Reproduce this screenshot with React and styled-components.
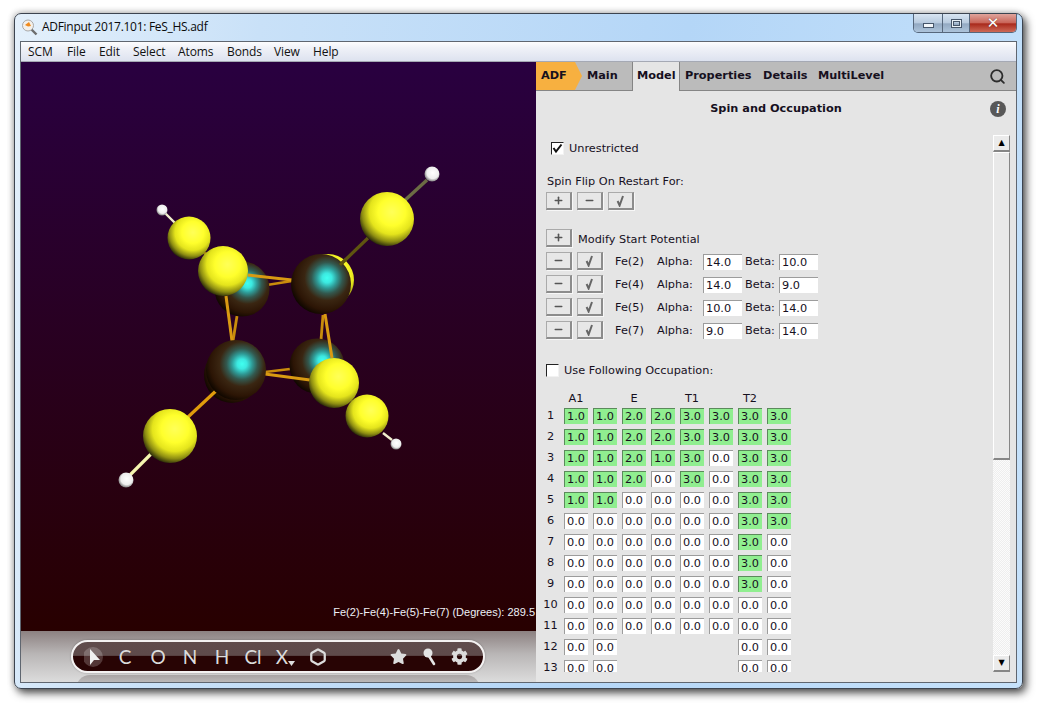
import React from "react";
import styled, { createGlobalStyle } from "styled-components";
import { Search, Hexagon, Plus, Minus } from "lucide-react";
import { FaStar, FaCog } from "react-icons/fa";

const GlobalStyle = createGlobalStyle`
  html, body { margin: 0; background: #fff; }
  * { box-sizing: border-box; }
`;

const Page = styled.div`
  padding: 13px 0 0 14px;
  height: 709px;
  overflow: hidden;
`;

const Window = styled.div`
  width: 1009px;
  height: 676px;
  display: flex;
  flex-direction: column;
  border: 1px solid #3c4450;
  border-radius: 7px;
  background: linear-gradient(100deg, #e4f0fb 0%, #c9e1f8 22%, #b4d6f7 60%, #c6e2fb 100%);
  box-shadow: 3px 4px 9px rgba(0, 0, 0, 0.7), -1px -1px 6px rgba(0, 0, 0, 0.2);
`;

const TitleBar = styled.div`
  height: 27px;
  flex: none;
  display: flex;
  align-items: flex-start;
  padding: 0 5px 0 6px;
  font: 12px/26px "Open Sans", sans-serif;
  letter-spacing: -0.29px;
  color: #0a0a0a;
`;

const AppIcon = styled.svg`
  width: 17px;
  height: 17px;
  margin: 5px 4px 0 0;
  flex: none;
`;

const WindowControls = styled.div`
  margin-left: auto;
  display: flex;
  height: 19px;
  border: 1px solid #56677c;
  border-top: none;
  border-radius: 0 0 5px 5px;
  overflow: hidden;
`;

const ControlButton = styled.div`
  width: ${({ $w }) => $w}px;
  display: flex;
  align-items: center;
  justify-content: center;
  border-left: ${({ $first }) => ($first ? "none" : "1px solid #56677c")};
  background: ${({ $close }) =>
    $close
      ? "linear-gradient(#e0a49c 0%, #c9665a 48%, #a92a1c 55%, #cd6a58 100%)"
      : "linear-gradient(#d8e5f2 0%, #b9cbdf 48%, #93a9c2 55%, #adc4db 100%)"};
`;

const MinGlyph = styled.span`
  width: 11px;
  height: 5px;
  margin-top: 5px;
  background: #f2f6fa;
  border: 1px solid #46566a;
`;

const MaxGlyph = styled.span`
  width: 11px;
  height: 9px;
  background: transparent;
  border: 1px solid #46566a;
  box-shadow: inset 0 0 0 1px #e8f0f7, inset 0 0 0 2px #46566a;
`;

const CloseGlyph = styled.span`
  font: bold 15px/1 "DejaVu Sans", sans-serif;
  color: #fff;
  text-shadow: 0 0 1px #56251e;
`;

const ClientFrame = styled.div`
  flex: 1;
  min-height: 0;
  margin: 0 5px 5px 5px;
  border: 1px solid #5f6670;
  display: flex;
  flex-direction: column;
  background: #e5e5e5;
`;

const MenuBar = styled.div`
  height: 20px;
  flex: none;
  display: flex;
  align-items: center;
  padding: 0 0 1px 7px;
  font: 12px "Open Sans", sans-serif;
  letter-spacing: -0.1px;
  color: #111;
  background: linear-gradient(#fdfdfe 0%, #f0f2f8 30%, #dde2ef 100%);
  border-bottom: 1px solid #a5a9b4;
`;

const MenuItem = styled.span`
  width: ${({ $w }) => $w}px;
  flex: none;
`;

const Main = styled.div`
  flex: 1;
  min-height: 0;
  display: flex;
`;

const LeftPane = styled.div`
  width: 515px;
  flex: none;
  display: flex;
  flex-direction: column;
`;

const Viewport = styled.div`
  position: relative;
  height: 569px;
  flex: none;
  background: linear-gradient(#290040 0%, #280000 100%);
`;

const SceneSvg = styled.svg`
  display: block;
  width: 515px;
  height: 569px;
`;

const Measure = styled.div`
  position: absolute;
  right: 1px;
  top: 544px;
  font: 11px "Liberation Sans", sans-serif;
  color: #eef0f6;
  white-space: nowrap;
`;

const EditBar = styled.div`
  flex: 1;
  padding: 9px 0 0 50px;
  overflow: hidden;
  background: linear-gradient(#8c8181 0%, #b9b6b6 45%, #dcdcdc 100%);
`;

const Pill = styled.div`
  position: relative;
  width: 414px;
  height: 33px;
  display: flex;
  align-items: center;
  padding-left: 7px;
  border: 2px solid #f4f2f2;
  border-radius: 17px;
  background: linear-gradient(#604c4c 0%, #5f4b4b 46%, #280404 50%, #280404 100%);
  box-shadow: 0 0 2px rgba(0, 0, 0, 0.3);
  font: 19px "Lato", sans-serif;
  color: #dcdcdc;

  &::after {
    content: "";
    position: absolute;
    left: 3px;
    right: 3px;
    top: 33px;
    height: 14px;
    border-radius: 14px 14px 0 0;
    background: linear-gradient(#a8a4a4, #cfcdcd);
  }
`;

const Tool = styled.span`
  width: ${({ $w }) => $w}px;
  margin-left: ${({ $gap }) => $gap || 0}px;
  padding-right: ${({ $pr }) => $pr || 0}px;
  flex: none;
  display: flex;
  align-items: center;
  justify-content: center;
  position: relative;
`;

const DropMark = styled.svg`
  position: absolute;
  right: 5px;
  bottom: 2px;
`;

const RightPane = styled.div`
  flex: 1;
  min-width: 0;
  display: flex;
  flex-direction: column;
  font: 11.3px "DejaVu Sans", sans-serif;
  color: #16101e;
  background: #e5e5e5;
`;

const TabBar = styled.div`
  height: 29px;
  flex: none;
  display: flex;
  background: #bbbbbb;
  border-bottom: 1px solid #858585;
  font-weight: bold;
  font-size: 11.3px;
`;

const BrandTab = styled.div`
  width: 46px;
  height: 28px;
  flex: none;
  padding: 7px 0 0 5px;
  background: #f7b040;
  clip-path: polygon(0 0, 39px 0, 46px 50%, 39px 100%, 0 100%);
`;

const Tab = styled.div`
  flex: none;
  width: ${({ $w }) => $w}px;
  padding: 7px 0 0 ${({ $pl }) => $pl || 0}px;
  height: ${({ $active }) => ($active ? "29px" : "28px")};
  background: ${({ $active }) => ($active ? "#e5e5e5" : "transparent")};
  border-left: ${({ $active }) => ($active ? "1px solid #858585" : "none")};
  border-right: ${({ $active }) => ($active ? "1px solid #858585" : "none")};
`;

const SearchSlot = styled.div`
  margin-left: auto;
  padding: 6px 10px 0 0;
  color: #2c2c2c;
`;

const Heading = styled.div`
  height: 44px;
  flex: none;
  display: grid;
  grid-template-columns: 1fr auto 1fr;
  padding-top: 11px;
  font-weight: bold;
  font-size: 11.3px;
`;

const InfoIcon = styled.div`
  justify-self: end;
  width: 16px;
  height: 16px;
  margin: -1px 10px 0 0;
  border-radius: 50%;
  background: #585858;
  color: #fff;
  text-align: center;
  font: italic bold 12px/16px "Liberation Serif", serif;
`;

const Body = styled.div`
  flex: 1;
  min-height: 0;
  display: flex;
  padding: 0 6px 10px 0;
`;

const Content = styled.div`
  flex: 1;
  min-width: 0;
  overflow: hidden;
  padding-top: 7px;
`;

const Scrollbar = styled.div`
  width: 17px;
  flex: none;
  display: flex;
  flex-direction: column;
  background: repeating-conic-gradient(#eeeeee 0 25%, #fbfbfb 0 50%) 0 0 / 2px 2px;
`;

const ScrollButton = styled.div`
  height: 17px;
  flex: none;
  display: flex;
  align-items: center;
  justify-content: center;
  margin-top: ${({ $end }) => ($end ? "auto" : "0")};
  background: #ebebeb;
  border: 1px solid #fff;
  border-right-color: #868686;
  border-bottom: 2px solid #868686;
  font: 8px/1 "DejaVu Sans", sans-serif;
  color: #000;
`;

const ScrollThumb = styled.div`
  height: 308px;
  flex: none;
  background: #e9e9e9;
  border: 1px solid #fff;
  border-right-color: #868686;
  border-bottom: 2px solid #868686;
`;

const CheckRow = styled.div`
  display: flex;
  align-items: center;
  height: 13px;
  gap: ${({ $gap }) => $gap}px;
  margin-top: ${({ $mt }) => $mt || 0}px;
  padding-left: ${({ $pl }) => $pl}px;
`;

const Checkbox = styled.span`
  width: 13px;
  height: 13px;
  flex: none;
  display: flex;
  background: #fff;
  border: 1px solid #f2f2f2;
  border-top-color: #222;
  border-left-color: #222;
`;

const SectionLabel = styled.div`
  margin: 20px 0 0 11px;
  height: 14px;
  line-height: 14px;
`;

const ButtonRow = styled.div`
  display: flex;
  align-items: center;
  height: 18px;
  gap: 5px;
  padding-left: 10px;
  margin-top: ${({ $mt }) => $mt || 0}px;
`;

const SquareButton = styled.div`
  width: 26px;
  height: 18px;
  flex: none;
  display: flex;
  align-items: center;
  justify-content: center;
  background: #e7e7e7;
  border: 1px solid #aaaaaa;
  border-right: 2px solid #8c8c8c;
  border-bottom: 2px solid #8c8c8c;
  box-shadow: 1px 1px 0 #f7f7f7;
  color: #555;
`;

const InlineLabel = styled.span`
  margin-left: ${({ $ml }) => $ml || 0}px;
  margin-top: ${({ $mt }) => $mt || 0}px;
  width: ${({ $w }) => ($w ? `${$w}px` : "auto")};
  flex: none;
`;

const Potentials = styled.div`
  display: flex;
  flex-direction: column;
  gap: 5px;
  margin-top: 19px;
`;

const ValueInput = styled.input`
  width: ${({ $w }) => $w}px;
  height: 16px;
  flex: none;
  padding: 0 0 0 2px;
  margin: 2px 0 0 ${({ $ml }) => $ml || 0}px;
  border: none;
  border-top: 1px solid ${({ $on }) => ($on ? "#5b8a5b" : "#9c9c9c")};
  border-left: 1px solid ${({ $on }) => ($on ? "#5b8a5b" : "#9c9c9c")};
  outline: none;
  border-radius: 0;
  background: ${({ $on }) => ($on ? "#90ee90" : "#fff")};
  font: 11.3px "DejaVu Sans", sans-serif;
  color: #16101e;
`;

const OccupationTable = styled.div`
  display: flex;
  flex-direction: column;
  gap: 5px;
  padding-left: 6px;
  margin-top: 15px;
`;

const TableRow = styled.div`
  display: grid;
  grid-template-columns: 17px repeat(8, 24px);
  column-gap: 5px;
  height: ${({ $head }) => ($head ? "14px" : "16px")};
  margin-bottom: ${({ $head }) => ($head ? "-3px" : "0")};
  align-items: center;
`;

const CellLabel = styled.span`
  text-align: center;
  line-height: 14px;
  white-space: nowrap;
`;

const OccCell = styled(ValueInput)`
  margin: 0;
`;

const menus = [
  ["SCM", 39], ["File", 32], ["Edit", 34], ["Select", 45], ["Atoms", 49],
  ["Bonds", 47], ["View", 39], ["Help", 40],
];

const potentials = [
  ["Fe(2)", "14.0", "10.0"],
  ["Fe(4)", "14.0", "9.0"],
  ["Fe(5)", "10.0", "14.0"],
  ["Fe(7)", "9.0", "14.0"],
];

// 0 = white cell, null = no cell in that place
const occupation = [
  [1, 1, 2, 2, 3, 3, 3, 3],
  [1, 1, 2, 2, 3, 3, 3, 3],
  [1, 1, 2, 1, 3, 0, 3, 3],
  [1, 1, 2, 0, 3, 0, 3, 3],
  [1, 1, 0, 0, 0, 0, 3, 3],
  [0, 0, 0, 0, 0, 0, 3, 3],
  [0, 0, 0, 0, 0, 0, 3, 0],
  [0, 0, 0, 0, 0, 0, 3, 0],
  [0, 0, 0, 0, 0, 0, 3, 0],
  [0, 0, 0, 0, 0, 0, 0, 0],
  [0, 0, 0, 0, 0, 0, 0, 0],
  [0, 0, null, null, null, null, 0, 0],
  [0, 0, null, null, null, null, 0, 0],
];

const bonds = [
  // back-to-front: thin ring bonds, then the stubs out to sulphur and hydrogen
  [267, 285, 292, 281, "#c98c0c", 2.4],
  [237, 316, 233, 341, "#c98c0c", 2.8],
  [323, 315, 321, 340, "#c98c0c", 2.8],
  [265, 372, 290, 369, "#c98c0c", 2.6],
  [340, 265, 368, 238, "#5f5510", 3.2],
  [403, 202, 427, 180, "#6c6c44", 3.4],
  [165, 213, 175, 223, "#f0eecc", 2.4],
  [200, 250, 206, 254, "#a87a10", 3],
  [352, 402, 357, 406, "#b08a10", 3],
  [383, 433, 392, 440, "#f0eecc", 2.4],
  [188, 417, 218, 389, "#e09c0c", 3.2],
  [130, 475, 153, 452, "#f5f5b0", 3.2],
];

const frontBonds = [
  [248, 275, 292, 280, "#d99a12", 3],
  [226, 296, 232, 341, "#d99a12", 3],
  [325, 314, 332, 358, "#d99a12", 3],
  [265, 374, 310, 380, "#d99a12", 3],
];

function Bond({ b }) {
  return <line x1={b[0]} y1={b[1]} x2={b[2]} y2={b[3]} stroke={b[4]} strokeWidth={b[5]} />;
}

function Atom({ x, y, r, fill }) {
  return <circle cx={x} cy={y} r={r} fill={`url(#${fill})`} />;
}

function Molecule() {
  return (
    <SceneSvg viewBox="21 62 515 569">
      <defs>
        <radialGradient id="iron" cx="0.6" cy="0.4" r="0.68">
          <stop offset="0" stopColor="#40fff0" />
          <stop offset="0.12" stopColor="#3ce8e0" />
          <stop offset="0.25" stopColor="#2f9a96" />
          <stop offset="0.38" stopColor="#33584e" />
          <stop offset="0.55" stopColor="#3a2612" />
          <stop offset="0.78" stopColor="#2c1505" />
          <stop offset="0.92" stopColor="#120800" />
          <stop offset="1" stopColor="#000" />
        </radialGradient>
        <radialGradient id="sulphur" cx="0.59" cy="0.37" r="0.67">
          <stop offset="0" stopColor="#ffff58" />
          <stop offset="0.38" stopColor="#ffff2c" />
          <stop offset="0.62" stopColor="#e4e41c" />
          <stop offset="0.82" stopColor="#8e8e12" />
          <stop offset="1" stopColor="#1a1a08" />
        </radialGradient>
        <radialGradient id="hydrogen" cx="0.55" cy="0.42" r="0.65">
          <stop offset="0" stopColor="#ffffff" />
          <stop offset="0.6" stopColor="#eeeeee" />
          <stop offset="1" stopColor="#555555" />
        </radialGradient>
      </defs>
      <Atom x={232} y={375} r={28} fill="iron" />
      <Atom x={328} y={280} r={26} fill="sulphur" />
      {bonds.map((b, i) => <Bond key={i} b={b} />)}
      <Atom x={162} y={210} r={5.5} fill="hydrogen" />
      <Atom x={396} y={444} r={5.5} fill="hydrogen" />
      <Atom x={432} y={174} r={7.5} fill="hydrogen" />
      <Atom x={126} y={480} r={7.5} fill="hydrogen" />
      <Atom x={189} y={238} r={21.5} fill="sulphur" />
      <Atom x={367} y={416} r={21.5} fill="sulphur" />
      <Atom x={242} y={289} r={27.5} fill="iron" />
      <Atom x={317} y={366} r={27.5} fill="iron" />
      {frontBonds.map((b, i) => <Bond key={i} b={b} />)}
      <Atom x={321} y={284} r={30} fill="iron" />
      <Atom x={236} y={370} r={30} fill="iron" />
      <line x1={340} y1={265} x2={346} y2={259} stroke="#5f5510" strokeWidth={3} />
      <Atom x={387} y={219} r={27} fill="sulphur" />
      <Atom x={170} y={436} r={27} fill="sulphur" />
      <Atom x={223} y={271} r={25} fill="sulphur" />
      <Atom x={334} y={383} r={25} fill="sulphur" />
    </SceneSvg>
  );
}

function CheckMark() {
  return (
    <svg width="11" height="11" viewBox="0 0 11 11">
      <path d="M1.5 5 L4 8.5 L9.5 1.5" fill="none" stroke="#111" strokeWidth="2" />
    </svg>
  );
}

function VerifyMark() {
  return (
    <svg width="9" height="12" viewBox="0 0 9 12">
      <path d="M1.6 6 L3.6 10.5 L7 1" fill="none" stroke="#666" strokeWidth="2" />
    </svg>
  );
}

export default function App() {
  return (
    <Page>
      <GlobalStyle />
      <Window>
        <TitleBar>
          <AppIcon viewBox="0 0 17 17">
            <line x1="9" y1="9" x2="15.5" y2="15.5" stroke="#6d6d6d" strokeWidth="2.4" />
            <circle cx="7" cy="6.5" r="5.5" fill="#f4f0ea" stroke="#a8a8a8" strokeWidth="1" />
            <path d="M4 6 L8 3 L10 7 L7 7.5 Z" fill="#f08a1c" />
          </AppIcon>
          <span>ADFinput 2017.101: FeS_HS.adf</span>
          <WindowControls>
            <ControlButton $w={28} $first><MinGlyph /></ControlButton>
            <ControlButton $w={27}><MaxGlyph /></ControlButton>
            <ControlButton $w={47} $close><CloseGlyph>✕</CloseGlyph></ControlButton>
          </WindowControls>
        </TitleBar>
        <ClientFrame>
          <MenuBar>
            {menus.map(([name, w]) => <MenuItem key={name} $w={w}>{name}</MenuItem>)}
          </MenuBar>
          <Main>
            <LeftPane>
              <Viewport>
                <Molecule />
                <Measure>Fe(2)-Fe(4)-Fe(5)-Fe(7) (Degrees): 289.5</Measure>
              </Viewport>
              <EditBar>
                <Pill>
                  <Tool $w={30}>
                    <svg width="22" height="24" viewBox="0 0 22 24">
                      <circle cx="9" cy="12" r="10" fill="#ffffff" opacity="0.2" />
                      <path d="M6 4 L6 20 L10 15 L16 15 Z" fill="#f0f0f0" />
                    </svg>
                  </Tool>
                  <Tool $w={30}>C</Tool>
                  <Tool $w={36}>O</Tool>
                  <Tool $w={28}>N</Tool>
                  <Tool $w={36}>H</Tool>
                  <Tool $w={26}>Cl</Tool>
                  <Tool $w={34} $pr={2}>
                    X
                    <DropMark width="7" height="5" viewBox="0 0 7 5">
                      <path d="M0 0 H7 L3.5 5 Z" fill="#dcdcdc" />
                    </DropMark>
                  </Tool>
                  <Tool $w={36}><Hexagon size={18} strokeWidth={3} /></Tool>
                  <Tool $w={32} $gap={46}><FaStar size={17} /></Tool>
                  <Tool $w={32}>
                    <svg width="14" height="18" viewBox="0 0 14 18">
                      <circle cx="5" cy="5" r="4.5" fill="#e4e4e4" />
                      <path d="M6 8 L11 16" stroke="#e4e4e4" strokeWidth="2.6" strokeLinecap="round" />
                    </svg>
                  </Tool>
                  <Tool $w={26}><FaCog size={17} /></Tool>
                </Pill>
              </EditBar>
            </LeftPane>
            <RightPane>
              <TabBar>
                <BrandTab>ADF</BrandTab>
                <Tab $w={50} $pl={5}>Main</Tab>
                <Tab $w={48} $pl={4} $active>Model</Tab>
                <Tab $w={83} $pl={5}>Properties</Tab>
                <Tab $w={55}>Details</Tab>
                <Tab $w={80}>MultiLevel</Tab>
                <SearchSlot><Search size={17} strokeWidth={2.6} /></SearchSlot>
              </TabBar>
              <Heading>
                <span />
                <span>Spin and Occupation</span>
                <InfoIcon>i</InfoIcon>
              </Heading>
              <Body>
                <Content>
                  <CheckRow $gap={5} $pl={15}>
                    <Checkbox><CheckMark /></Checkbox>
                    Unrestricted
                  </CheckRow>
                  <SectionLabel>Spin Flip On Restart For:</SectionLabel>
                  <ButtonRow $mt={3}>
                    <SquareButton><Plus size={11} strokeWidth={3.4} /></SquareButton>
                    <SquareButton><Minus size={11} strokeWidth={3.4} /></SquareButton>
                    <SquareButton><VerifyMark /></SquareButton>
                  </ButtonRow>
                  <Potentials>
                    <ButtonRow>
                      <SquareButton><Plus size={11} strokeWidth={3.4} /></SquareButton>
                      <InlineLabel $ml={1} $mt={2}>Modify Start Potential</InlineLabel>
                    </ButtonRow>
                    {potentials.map(([atom, alpha, beta]) => (
                      <ButtonRow key={atom}>
                        <SquareButton><Minus size={11} strokeWidth={3.4} /></SquareButton>
                        <SquareButton><VerifyMark /></SquareButton>
                        <InlineLabel $ml={7} $w={42}>{atom}</InlineLabel>
                        <InlineLabel $ml={-5} $w={46}>Alpha:</InlineLabel>
                        <ValueInput $w={39} $ml={-5} readOnly value={alpha} />
                        <InlineLabel $ml={-2} $w={34}>Beta:</InlineLabel>
                        <ValueInput $w={39} $ml={-5} readOnly value={beta} />
                      </ButtonRow>
                    ))}
                  </Potentials>
                  <CheckRow $gap={5} $mt={25} $pl={10}>
                    <Checkbox />
                    Use Following Occupation:
                  </CheckRow>
                  <OccupationTable>
                    <TableRow $head>
                      <span />
                      <CellLabel>A1</CellLabel><span />
                      <CellLabel>E</CellLabel><span />
                      <CellLabel>T1</CellLabel><span />
                      <CellLabel>T2</CellLabel><span />
                    </TableRow>
                    {occupation.map((row, i) => (
                      <TableRow key={i}>
                        <CellLabel>{i + 1}</CellLabel>
                        {row.map((v, j) =>
                          v === null ? (
                            <span key={j} />
                          ) : (
                            <OccCell key={j} $w={24} $on={v > 0} readOnly value={`${v}.0`} />
                          )
                        )}
                      </TableRow>
                    ))}
                  </OccupationTable>
                </Content>
                <Scrollbar>
                  <ScrollButton>▲</ScrollButton>
                  <ScrollThumb />
                  <ScrollButton $end>▼</ScrollButton>
                </Scrollbar>
              </Body>
            </RightPane>
          </Main>
        </ClientFrame>
      </Window>
    </Page>
  );
}
